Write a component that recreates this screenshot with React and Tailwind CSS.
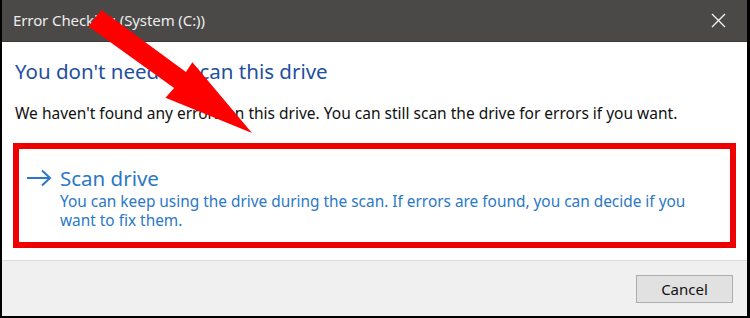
import React from "react";

function CloseIcon() {
  return (
    <svg width="15" height="15" viewBox="0 0 15 15" className="block">
      <path d="M1 1 L14 14 M14 1 L1 14" stroke="#f2f2f2" strokeWidth="1.4" fill="none" />
    </svg>
  );
}

function LinkArrow() {
  return (
    <svg width="26" height="20" viewBox="0 0 26 20" className="block">
      <path d="M1 10 H24 M16 2.5 L24 10 L16 17.5" stroke="#2a78c6" strokeWidth="2" fill="none" strokeLinejoin="miter" />
    </svg>
  );
}

function RedArrow() {
  return (
    <svg className="absolute inset-0 pointer-events-none" width="750" height="318" viewBox="0 0 750 318">
      <polygon
        points="101.5,9.9 185.9,72.0 192.4,62.3 252,133 165.5,97.8 174.1,88.1 88.5,26.6"
        fill="#ff0000"
      />
    </svg>
  );
}

export default function App() {
  return (
    <div
      className="relative w-[750px] h-[318px] overflow-hidden bg-black"
      style={{ fontFamily: '"Noto Sans", "Open Sans", sans-serif' }}
    >
      <div className="flex flex-col h-[316px] ml-[2px] mr-[3px]">
        <div className="h-[42px] bg-[#4a4948] flex items-center justify-between pl-[11px] pr-[21px] border-b border-[#3a3938]">
          <span className="text-[15px] text-[#ececec] tracking-[-0.1px]">Error Checking (System (C:))</span>
          <CloseIcon />
        </div>
        <div className="flex-1 bg-white px-[13px] pt-[15px]">
          <div className="text-[20.5px] leading-[28px] text-[#1f4f9f]">You don't need to scan this drive</div>
          <p className="mt-[18px] text-[15.5px] leading-[20px] text-[#111]">
            We haven't found any errors on this drive. You can still scan the drive for errors if you want.
          </p>
          <div className="mt-[20px] mx-[-2px] border-[6px] border-[#ee0000] h-[105px] pl-[7px] pt-[15px]">
            <div className="flex items-center gap-[8px]">
              <LinkArrow />
              <span className="text-[20.5px] leading-[28px] text-[#2a78c6]">Scan drive</span>
            </div>
            <p className="ml-[34px] w-[650px] text-[15.4px] leading-[19px] text-[#2a78c6]">
              You can keep using the drive during the scan. If errors are found, you can decide if you want to fix them.
            </p>
          </div>
        </div>
        <div className="h-[56px] bg-[#f0f0f0] border-t border-[#dcdcdc] flex items-center justify-end pr-[14px]">
          <button className="w-[97px] h-[28px] bg-[#e1e1e1] border border-[#adadad] text-[15px] text-[#111] leading-none mt-[1px]">
            Cancel
          </button>
        </div>
      </div>
      <RedArrow />
    </div>
  );
}
